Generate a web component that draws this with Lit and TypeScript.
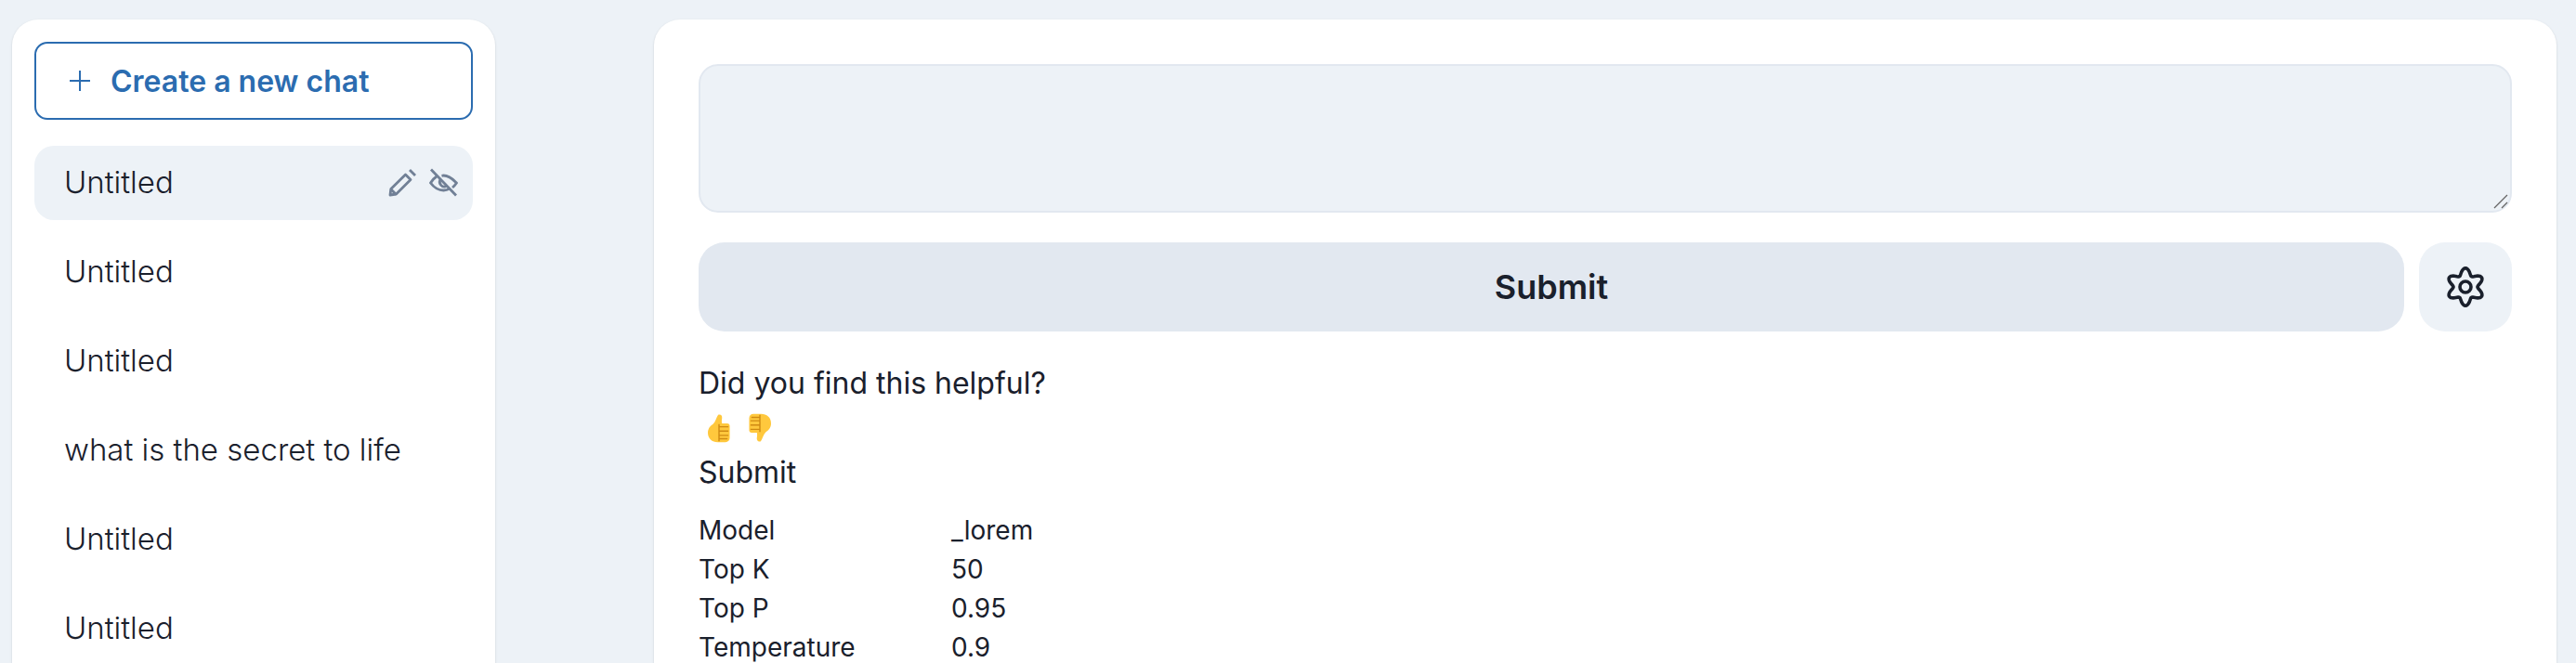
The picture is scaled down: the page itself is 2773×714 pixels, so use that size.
import { LitElement, html, css, svg } from "lit";
import { customElement } from "lit/decorators.js";

const gearPath = (() => {
  const pts: string[] = [];
  for (let i = 0; i <= 120; i++) {
    const t = (i / 120) * Math.PI * 2;
    const r = 8.3 + 1.8 * Math.cos(6 * t);
    const x = 12 + r * Math.sin(t);
    const y = 12 - r * Math.cos(t);
    pts.push(`${i ? "L" : "M"}${x.toFixed(2)} ${y.toFixed(2)}`);
  }
  return pts.join("") + "Z";
})();

@customElement("app-root")
export class AppRoot extends LitElement {
  static styles = css`
    :host {
      display: flex;
      height: 100vh;
      overflow: hidden;
      box-sizing: border-box;
      padding: 21px 21px 0 13px;
      gap: 171px;
      background: #edf2f7;
      font-family: Inter, "Liberation Sans", sans-serif;
      color: #1a202c;
      font-size: 32px;
    }
    * { box-sizing: border-box; }
    .card {
      background: #fff;
      border-radius: 28px 28px 0 0;
      box-shadow: 0 1px 3px rgba(0,0,0,.1), 0 1px 2px rgba(0,0,0,.06);
    }
    .side {
      width: 520px;
      flex: none;
      padding: 24px 24px 0;
      display: flex;
      flex-direction: column;
    }
    .new {
      height: 84px;
      flex: none;
      border: 2px solid #2b6cb0;
      border-radius: 14px;
      display: flex;
      align-items: center;
      padding-left: 36px;
      gap: 22px;
      color: #2b6cb0;
      font-weight: 600;
      font-size: 32px;
      margin-bottom: 28px;
    }
    .list { display: flex; flex-direction: column; gap: 16px; }
    .row {
      height: 80px;
      border-radius: 21px;
      display: flex;
      align-items: center;
      padding: 0 32px 2px;
      justify-content: space-between;
      flex: none;
      font-weight: 300;
      font-size: 33px;
    }
    .row.on { background: #edf2f7; padding-right: 16px; }
    .tools { display: flex; gap: 13px; color: #718096; }
    .main {
      flex: 1;
      padding: 48px 48px 0 48px;
      display: flex;
      flex-direction: column;
    }
    .ta {
      height: 160px;
      background: #edf2f7;
      border: 2px solid #e2e8f0;
      border-radius: 21px;
      flex: none;
      position: relative;
      margin-bottom: 32px;
    }
    .grip { position: absolute; right: 2px; bottom: 2px; }
    .actions { display: flex; gap: 16px; height: 96px; flex: none; margin-bottom: 32px; }
    .submit {
      flex: 1;
      background: #e2e8f0;
      border-radius: 28px;
      display: flex;
      align-items: center;
      justify-content: center;
      font-weight: 600;
      font-size: 36px;
    }
    .gear {
      width: 100px;
      background: #edf2f7;
      border-radius: 28px;
      display: flex;
      align-items: center;
      justify-content: center;
    }
    .fb { line-height: 48px; }
    .thumbs { display: flex; gap: 20px; height: 48px; align-items: center; padding-left: 10px; }
    .down { transform: rotate(180deg); }
    .meta {
      margin-top: 17px;
      display: grid;
      grid-template-columns: 272px 1fr;
      grid-auto-rows: 42px;
      align-items: center;
      font-size: 28px;
    }
  `;

  thumb(down: boolean) {
    return html`<svg class=${down ? "down" : ""} width="24" height="32" viewBox="0 0 26 33">
      <path fill="#ffc83d" d="M12 1c3-1 5 1 4.500 4 -.4 2.500 -.5 4 0 6h6c2 0 3 1.500 3 3v14c0 3 -2 5 -5 5h-9C5 33 0 29 0 22c0-5 3-8 6-10 3-3 4-8 6-11z"/>
      <path fill="none" stroke="#cf8a13" stroke-width="1.500" d="M13 12v20M13 15h11M13 20h11M13 25h11M13 29h10"/>
    </svg>`;
  }

  render() {
    const rows = ["Untitled", "Untitled", "Untitled", "what is the secret to life", "Untitled", "Untitled"];
    return html`
      <aside class="card side">
        <div class="new">
          <svg width="22" height="22" viewBox="0 0 22 22" fill="none" stroke="currentColor" stroke-width="2"><path d="M11 0v22M0 11h22"/></svg>
          <span>Create a new chat</span>
        </div>
        <div class="list">
          ${rows.map((r, i) => html`<div class="row ${i === 0 ? "on" : ""}">
            <span>${r}</span>
            ${i === 0 ? html`<span class="tools">
              <svg width="31" height="31" viewBox="0 0 31 31" fill="none" stroke="currentColor" stroke-width="2.800" stroke-linejoin="round">
                <path d="M2 29l.8-6.500L18.500 7l5.500 5.500L8.500 28z"/><path d="M23 2l6 6"/><path d="M3 23l5.500 5.500"/>
              </svg>
              <svg width="31" height="31" viewBox="0 0 31 31" fill="none" stroke="currentColor" stroke-width="2.800" stroke-linejoin="round">
                <path d="M8 9C5 11 3 13.500 1.500 16c3 4 8 8 14 8 3 0 5-1 7-2M13.500 8.300c1-.2 1.500-.3 2-.3 6.500 0 11 5 14 8-1 1.500-2.500 3.300-4.500 5"/>
                <path d="M12 12.500a5 5 0 0 0 6.500 7"/><path d="M2 1.500l27 28"/>
              </svg>
            </span>` : ""}
          </div>`)}
        </div>
      </aside>
      <main class="card main">
        <div class="ta">
          <svg class="grip" width="16" height="16" viewBox="0 0 16 16" fill="none" stroke="#666" stroke-width="1.300"><path d="M1 15L15 1M9 15l6-6"/></svg>
        </div>
        <div class="actions">
          <div class="submit">Submit</div>
          <div class="gear">
            <svg width="48" height="48" viewBox="0 0 24 24" fill="none" stroke="#1a202c" stroke-width="1.800">
              ${svg`<path d=${gearPath}/><circle cx="12" cy="12" r="3"/>`}
            </svg>
          </div>
        </div>
        <div class="fb">
          <div>Did you find this helpful?</div>
          <div class="thumbs">${this.thumb(false)}${this.thumb(true)}</div>
          <div>Submit</div>
        </div>
        <div class="meta">
          <span>Model</span><span>_lorem</span>
          <span>Top K</span><span>50</span>
          <span>Top P</span><span>0.95</span>
          <span>Temperature</span><span>0.9</span>
        </div>
      </main>
    `;
  }
}
